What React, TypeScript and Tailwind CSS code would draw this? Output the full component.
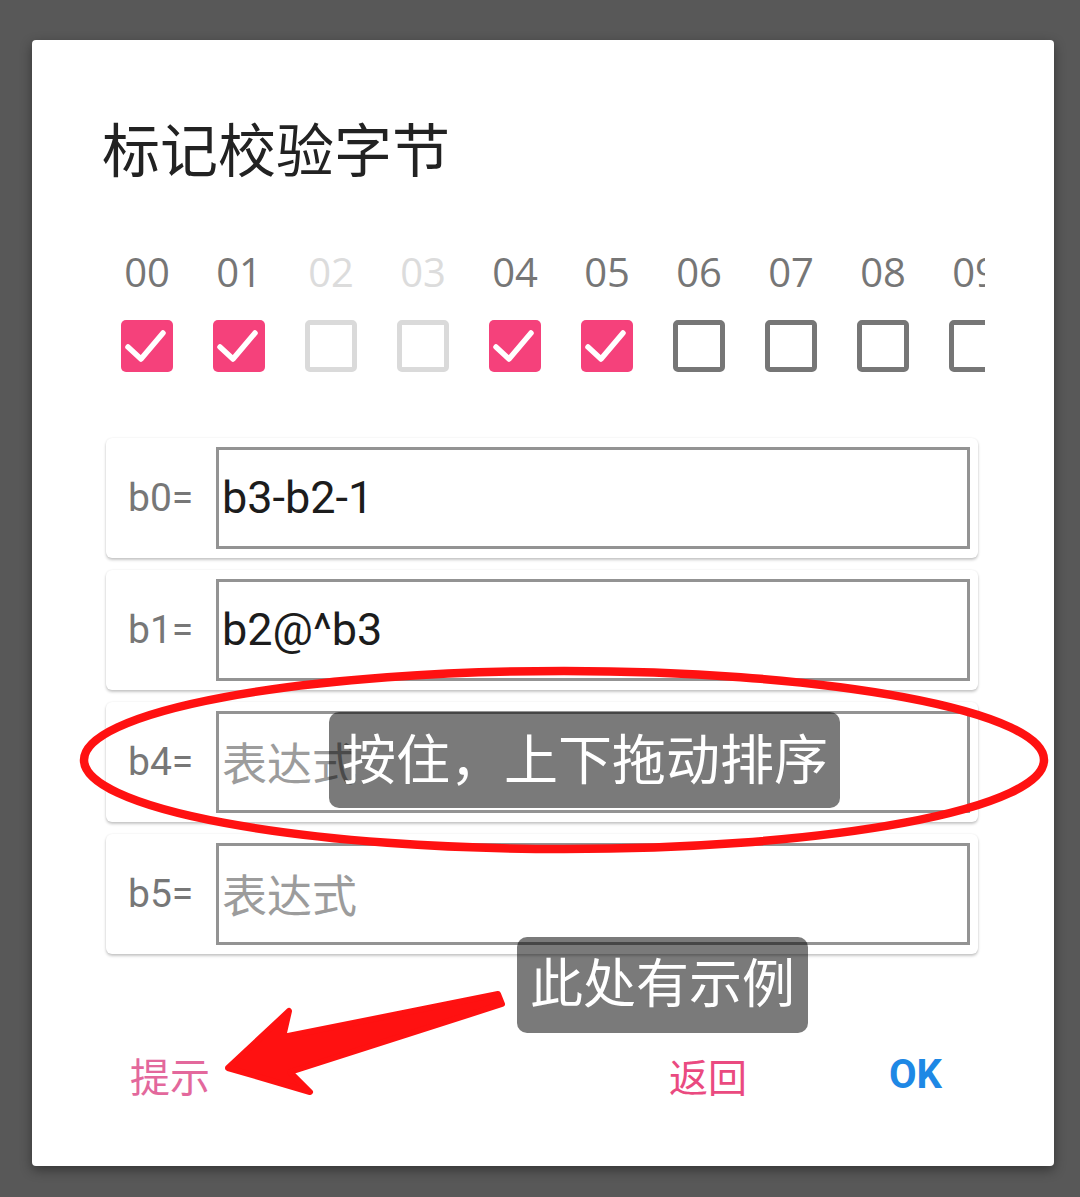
import React from 'react';

type Cell = { label: string; state: 'on' | 'off' | 'disabled' };

const cells: Cell[] = [
  { label: '00', state: 'on' },
  { label: '01', state: 'on' },
  { label: '02', state: 'disabled' },
  { label: '03', state: 'disabled' },
  { label: '04', state: 'on' },
  { label: '05', state: 'on' },
  { label: '06', state: 'off' },
  { label: '07', state: 'off' },
  { label: '08', state: 'off' },
  { label: '09', state: 'off' },
];

const rows = [
  { name: 'b0=', value: 'b3-b2-1' },
  { name: 'b1=', value: 'b2@^b3' },
  { name: 'b4=', value: '' },
  { name: 'b5=', value: '' },
];

const cjk = "font-['Noto_Sans_CJK_SC',sans-serif]";

function Box({ state }: { state: Cell['state'] }) {
  if (state === 'on') {
    return (
      <div className="h-[52px] w-[52px] rounded-[5px] bg-[#f5417b]">
        <svg width="52" height="52" viewBox="0 0 52 52">
          <path d="M7 27 L20 39 L42 13" fill="none" stroke="white" strokeWidth="5.5" strokeLinecap="round" strokeLinejoin="round" />
        </svg>
      </div>
    );
  }
  return (
    <div
      className={
        state === 'off'
          ? 'h-[52px] w-[52px] rounded-[5px] border-[5px] border-[#767676]'
          : 'h-[52px] w-[52px] rounded-[5px] border-[5px] border-[#dadada]'
      }
    />
  );
}

function ExprRow({ name, value }: { name: string; value: string }) {
  return (
    <div className="flex h-[120px] items-center rounded-[6px] bg-white pl-[22px] pr-[8px] shadow-[0_2px_3px_rgba(0,0,0,0.22),0_0_2px_rgba(0,0,0,0.08)]">
      <span className="w-[88px] font-['Roboto',sans-serif] text-[39px] text-[#777]">{name}</span>
      <div className="flex h-[102px] flex-1 items-center border-[3px] border-[#939393] pl-[3px]">
        {value ? (
          <span className="font-['Roboto',sans-serif] text-[45px] text-[#1c1c1c]">{value}</span>
        ) : (
          <span className={`${cjk} text-[45px] text-[#9c9c9c]`}>表达式</span>
        )}
      </div>
    </div>
  );
}

export default function App() {
  return (
    <div className="relative h-[1197px] w-[1080px] overflow-hidden bg-[#585858] pl-[32px] pt-[40px]">
      <div className="flex h-[1126px] w-[1022px] flex-col rounded-[4px] bg-white shadow-[0_4px_12px_rgba(0,0,0,0.4)]">
        <h1 className={`${cjk} pl-[70px] pt-[78px] text-[58px] leading-[58px] text-[#222]`}>标记校验字节</h1>

        <div className="mt-[68px] ml-[69px] flex w-[884px] overflow-hidden">
          {cells.map((c) => (
            <div key={c.label} className="flex w-[92px] shrink-0 flex-col items-center">
              <span
                className={
                  c.state === 'disabled'
                    ? "font-['Open_Sans',sans-serif] text-[40px] leading-[56px] text-[#dcdcdc]"
                    : "font-['Open_Sans',sans-serif] text-[40px] leading-[56px] text-[#767676]"
                }
              >
                {c.label}
              </span>
              <div className="mt-[20px]">
                <Box state={c.state} />
              </div>
            </div>
          ))}
        </div>

        <div className="mt-[66px] ml-[74px] mr-[76px] flex flex-col gap-[12px]">
          {rows.map((r) => (
            <ExprRow key={r.name} name={r.name} value={r.value} />
          ))}
        </div>

        <div className="mt-[98px] flex items-center justify-between pl-[98px] pr-[112px]">
          <span className={`${cjk} text-[40px] leading-[46px] text-[#e3689c]`}>提示</span>
          <div className="flex items-center gap-[142px]">
            <span className={`${cjk} text-[39px] leading-[46px] text-[#ea4a80]`}>返回</span>
            <span className="font-['Roboto',sans-serif] text-[40px] font-bold leading-[46px] text-[#1e88e5]">OK</span>
          </div>
        </div>
      </div>

      <svg className="pointer-events-none absolute left-0 top-0" width="1080" height="1197" viewBox="0 0 1080 1197">
        <ellipse cx="564" cy="760" rx="480" ry="89" fill="none" stroke="#ff1111" strokeWidth="8.5" />
        <polygon
          points="228,1068 289,1011 283,1037 498,994 502,1004 290,1072 310,1092"
          fill="#ff1111"
          stroke="#ff1111"
          strokeWidth="6"
          strokeLinejoin="round"
        />
      </svg>

      <div className={`${cjk} absolute left-[329px] top-[712px] flex h-[96px] w-[511px] items-center rounded-[10px] bg-[rgba(0,0,0,0.52)] pb-[8px] pl-[13px] text-[54px] text-white`}>
        按住，上下拖动排序
      </div>
      <div className={`${cjk} absolute left-[517px] top-[937px] flex h-[96px] w-[291px] items-center rounded-[10px] bg-[rgba(0,0,0,0.52)] pb-[8px] pl-[13px] text-[53px] text-white`}>
        此处有示例
      </div>
    </div>
  );
}
